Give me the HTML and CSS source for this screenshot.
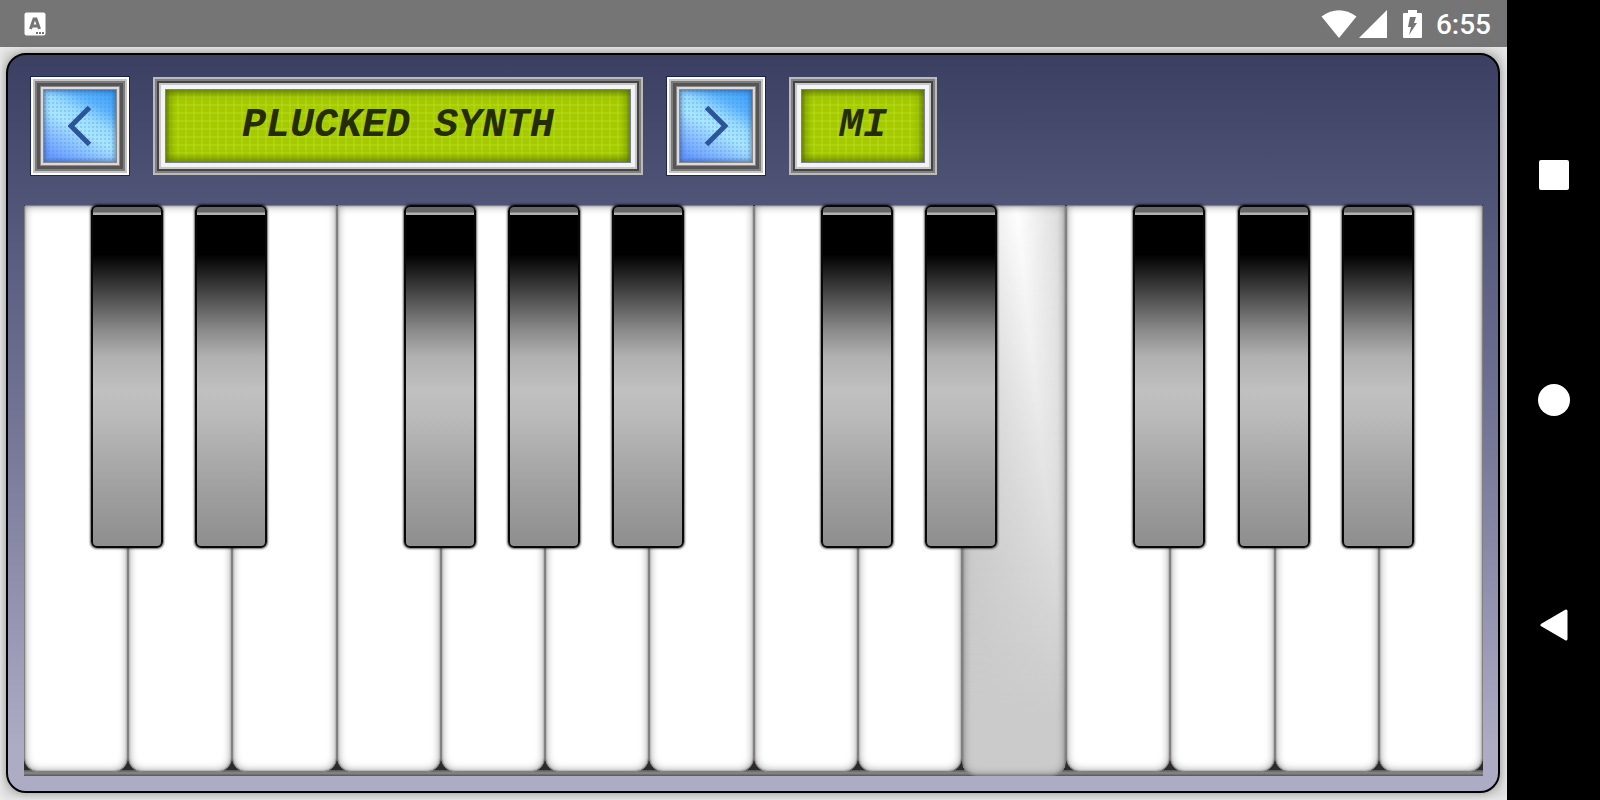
FILE: index.html
```
<!DOCTYPE html>
<html lang="en">
<head>
    <meta charset="UTF-8">
    <meta name="viewport" content="width=device-width, initial-scale=1.0">
    <title>Piano</title>
    <link rel="stylesheet" href="styles.css">
</head>
<body>
<div class="screen">
    <header class="status">
        <svg class="status-app" width="22" height="24" viewBox="0 0 22 24">
            <rect x="0.5" y="0.5" width="21" height="23" rx="2" fill="#fff"/>
            <path d="M6.500 17 L10 7 H12 L15.500 17 M8 14 H14" fill="none" stroke="#757575" stroke-width="3"/>
            <path d="M12 21 h2 M15 21 h2 M18 21 h2" stroke="#757575" stroke-width="2"/>
        </svg>
        <div class="status-icons">
            <svg width="36" height="28" viewBox="0 0 36 28">
                <path d="M0.500 6.500 Q18 -6 35.500 6.500 L18 28 Z" fill="#fff"/>
            </svg>
            <svg width="28" height="28" viewBox="0 0 28 28">
                <path d="M28 0 V28 H0 Z" fill="#fff"/>
            </svg>
            <svg class="battery" width="19" height="28" viewBox="0 0 19 28">
                <path d="M5 0 H14 V3 H18 Q19 3 19 4 V27 Q19 28 18 28 H1 Q0 28 0 27 V4 Q0 3 1 3 H5 Z" fill="#fff"/>
                <path d="M7 7 L13 7 L11 13 H14 L6 25 L8 17 H5 Z" fill="#757575"/>
            </svg>
            <span class="clock">6:55</span>
        </div>
    </header>

    <main class="app">
        <div class="panel">
            <div class="controls">
                <button class="btn" id="prev" aria-label="Previous instrument">
                    <svg width="24" height="42" viewBox="0 0 24 42">
                        <path d="M21.500 2.500 L3 21 L21.500 39.500" fill="none" stroke="#2b5596" stroke-width="5"/>
                    </svg>
                </button>
                <div class="lcd lcd-name"><span id="name">PLUCKED SYNTH</span></div>
                <button class="btn" id="next" aria-label="Next instrument">
                    <svg width="24" height="42" viewBox="0 0 24 42">
                        <path d="M2.500 2.500 L21 21 L2.500 39.500" fill="none" stroke="#2b5596" stroke-width="5"/>
                    </svg>
                </button>
                <div class="lcd lcd-note"><span id="note">MI</span></div>
            </div>
            <div class="keys" id="keys"></div>
        </div>
    </main>
</div>

<nav class="navbar">
    <button class="nav-btn" aria-label="Recent apps">
        <svg width="32" height="32" viewBox="0 0 32 32"><rect x="1" y="1" width="30" height="30" rx="2" fill="#fff"/></svg>
    </button>
    <button class="nav-btn" aria-label="Home">
        <svg width="32" height="32" viewBox="0 0 32 32"><circle cx="16" cy="16" r="16" fill="#fff"/></svg>
    </button>
    <button class="nav-btn" aria-label="Back">
        <svg width="32" height="32" viewBox="0 0 32 32">
            <path d="M4 16 L28 2 V30 Z" fill="#fff" stroke="#fff" stroke-width="3" stroke-linejoin="round"/>
        </svg>
    </button>
</nav>
<script src="script.js"></script>
</body>
</html>
```

FILE: styles.css
```
* {
    box-sizing: border-box;
}
body {
    margin: 0;
    display: flex;
    height: 100vh;
    background: #000;
    font-family: Roboto, "Liberation Sans", sans-serif;
}
button {
    padding: 0;
    border: 0;
    background: none;
}
svg {
    display: block;
}
.screen {
    flex: 1;
    display: flex;
    flex-direction: column;
}

/* status bar */
.status {
    height: 47px;
    flex: none;
    display: flex;
    justify-content: space-between;
    align-items: center;
    padding: 0 16px 0 24px;
    background: #757575;
}
.status-icons {
    display: flex;
    align-items: center;
    gap: 2px;
}
.battery {
    margin: 0 12px 0 14px;
}
.clock {
    color: #fff;
    font-size: 28px;
    font-weight: 500;
    line-height: 32px;
    padding-top: 2px;
}

/* instrument */
.app {
    flex: 1;
    display: flex;
    padding: 6px 7px 7px 6px;
    background: #d6d6d6;
    box-shadow: inset 0 0 12px #f4f4f4;
}
.panel {
    flex: 1;
    display: flex;
    flex-direction: column;
    gap: 30px;
    padding: 22px 15px 15px 16px;
    border: 2px solid #000;
    border-radius: 20px;
    background: linear-gradient(#3b4063, #505578 20%, #8080a0 60%, #aeabc4 94%);
    box-shadow: 0 0 8px rgba(0, 0, 0, .3);
}
.controls {
    display: flex;
    gap: 24px;
    padding-left: 7px;
}
.btn, .lcd {
    position: relative;
    display: flex;
    align-items: center;
    justify-content: center;
    height: 98px;
}
.btn {
    width: 98px;
    background:
        radial-gradient(rgba(60, 130, 230, .25) 1px, transparent 1px) 0 0 / 4px 4px,
        linear-gradient(30deg, #6a9cff 20%, #8ec4ff 36%, #a9e6ff 48%, #9adcff 58%, #5cb4fb 70%, #3aa0f8 85%);
    box-shadow:
        0 0 0 1px rgba(10, 20, 90, .7),
        inset 0 0 0 2px #fff,
        inset 0 0 0 4px #c4c4c4,
        inset 0 0 0 6px #7c7c7c,
        inset 0 0 0 9px #555,
        inset 0 0 0 10px #8a8a8a,
        inset 0 0 0 12px #e0d8d8,
        inset 0 0 0 13px #8a8a8a,
        inset 0 0 5px 14px rgba(30, 60, 110, .6);
}
.lcd {
    color: #262d06;
    font: italic bold 40px/48px "Liberation Mono", monospace;
    background:
        linear-gradient(rgba(190, 225, 40, .35) 2px, transparent 2px) 0 3px / 8px 8px,
        linear-gradient(90deg, rgba(190, 225, 40, .35) 2px, transparent 2px) 0 0 / 8px 8px,
        #a5cb00;
    box-shadow:
        inset 0 0 0 2px #bbb,
        inset 0 0 0 4px #808080,
        inset 0 0 0 6px #444,
        inset 0 0 0 8px #c8c8c8,
        inset 0 0 0 12px #f4f4f4,
        inset 0 0 0 13px #7c80a0,
        inset 0 0 8px 15px rgba(60, 80, 0, .8);
}
.lcd-name {
    width: 490px;
}
.lcd-note {
    width: 148px;
}

/* keyboard */
.keys {
    flex: 1;
    display: flex;
    background: linear-gradient(#2c2b29 calc(100% - 6px), #555 0, #8a8a8a calc(100% - 3px), #555);
}
.key {
    position: relative;
    flex: 1;
    display: flex;
}
.white {
    flex: 1;
    margin-bottom: 4px;
    border: 1px solid #808080;
    border-radius: 2px 2px 14px 14px;
    background: #fff;
    box-shadow: inset 0 0 2px rgba(0, 0, 0, .4), inset 0 0 9px rgba(0, 0, 0, .4);
}
.key.pressed .white {
    margin-bottom: 0;
    background:
        linear-gradient(transparent, #cbcbcb 90%),
        linear-gradient(84deg, #cbcbcb 20%, #fff 70%, #d8d8d8);
}
.black {
    position: absolute;
    z-index: 1;
    top: 0;
    right: -35px;
    width: 72px;
    height: 60%;
    border: 2px solid #080808;
    border-radius: 6px;
    background: linear-gradient(#666 5px, #b0b0b0 6px, #b0b0b0 8px, #000 8px, #000 14%, #505050 27%, #888 36%, #b0b0b0 44%, #c0c0c0 54%, #bbb 61%, #a0a0a0 83%, #8e8e8e);
    box-shadow: 0 0 2px 1px rgba(0, 0, 0, .6);
}
@media (max-width: 1000px) {
    .lcd-name {
        flex: 1;
    }
}

/* navigation */
.navbar {
    width: 93px;
    flex: none;
    display: flex;
    flex-direction: column;
    justify-content: space-around;
    align-items: center;
    padding: 62px 0;
    background: #000;
}
```

FILE: script.js
```
let keys = document.getElementById('keys');

// white keys followed by a black one, from C
let sharps = [0, 1, 3, 4, 5];
let pressed = 9;

let tag = '';
for (let i = 0; i < 14; i++) {
    tag += `<div class="key${i === pressed ? ' pressed' : ''}">`;
    tag += '<button class="white" aria-label="White key"></button>';
    if (sharps.includes(i % 7)) {
        tag += '<button class="black" aria-label="Black key"></button>';
    }
    tag += '</div>';
}
keys.innerHTML = tag;
```
